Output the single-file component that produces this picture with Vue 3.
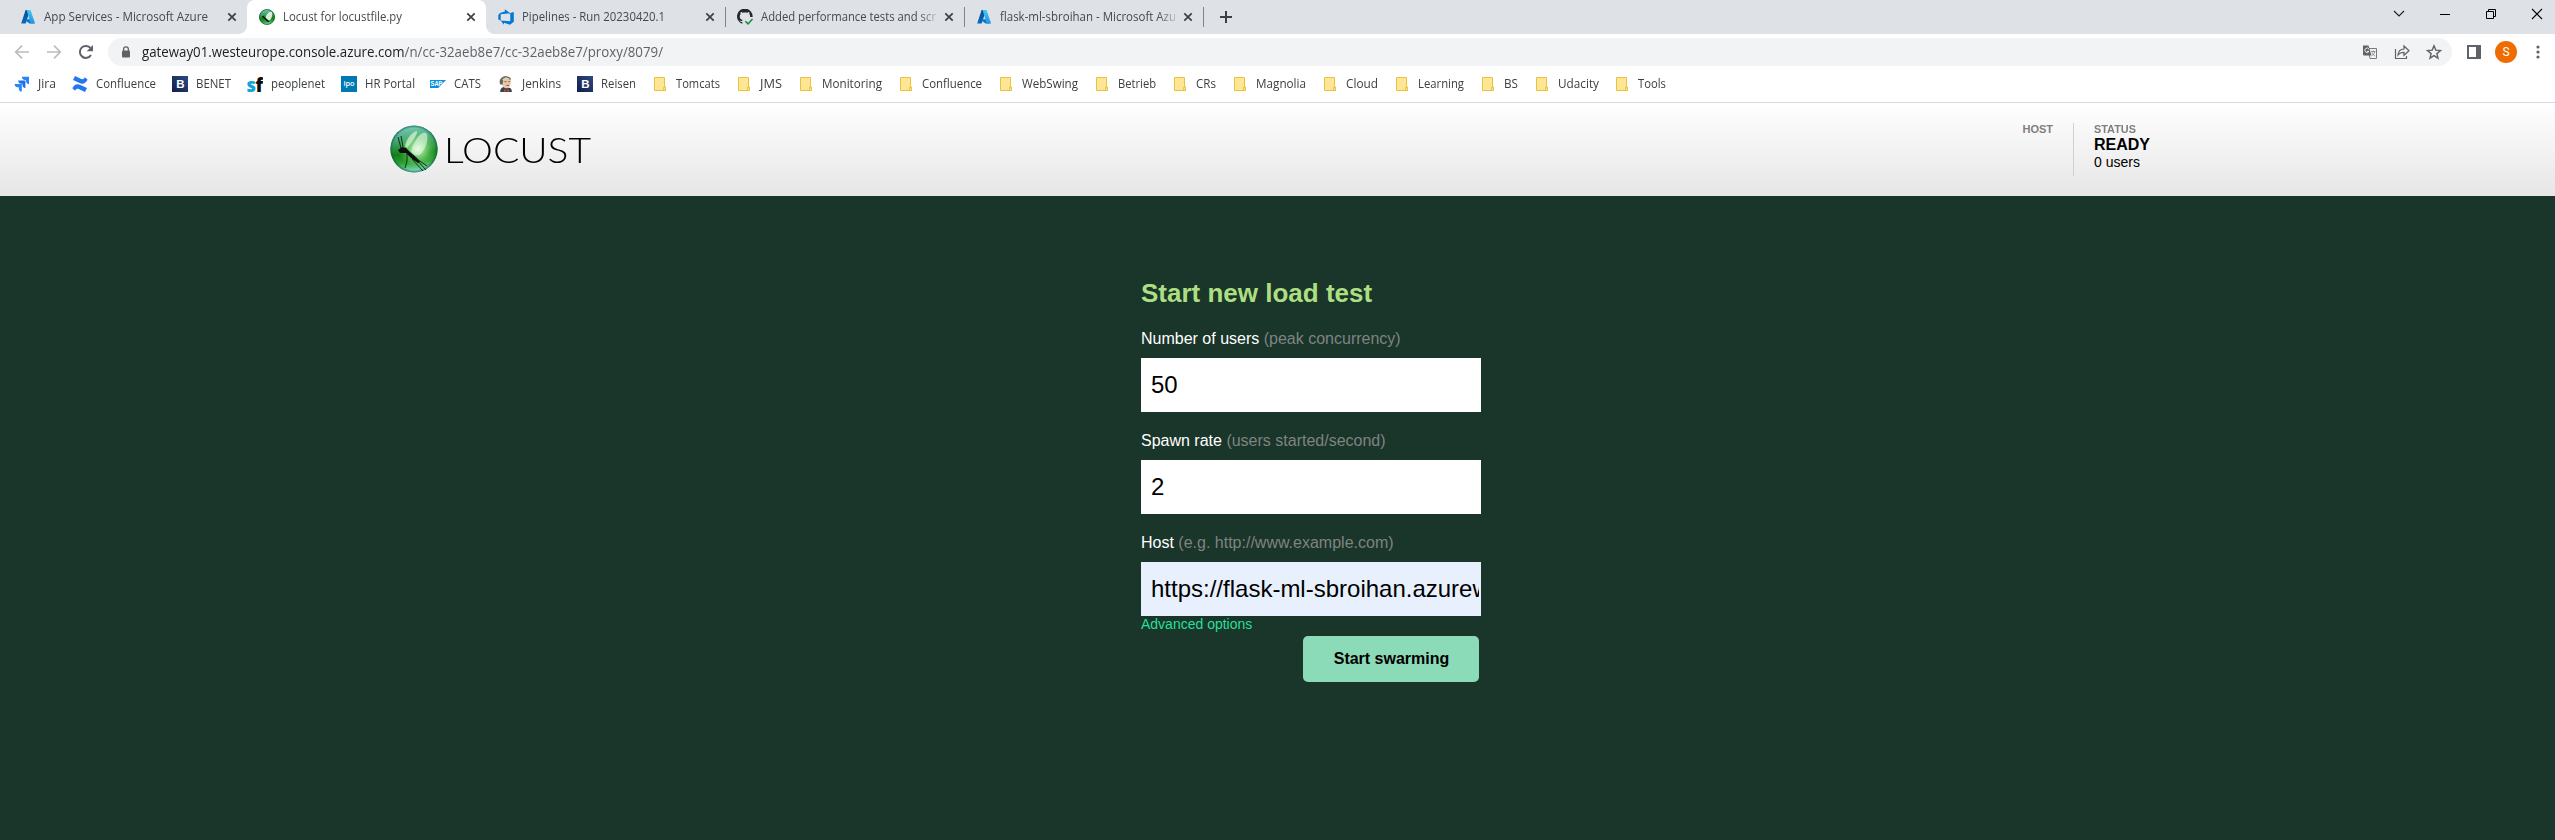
<script setup>
const tabs = [
  { icon: 'azure', title: 'App Services - Microsoft Azure', w: 164 },
  { icon: 'locust', title: 'Locust for locustfile.py', w: 119, active: true },
  { icon: 'devops', title: 'Pipelines - Run 20230420.1', w: 143 },
  { icon: 'github', title: 'Added performance tests and scr', w: 175, line: true, fade: true },
  { icon: 'azure', title: 'flask-ml-sbroihan - Microsoft Azu', w: 176, line: true, fade: true },
]

/* slot: distance to the next bookmark, w: label width */
const bookmarks = [
  { icon: 'jira', label: 'Jira', slot: 58, w: 18 },
  { icon: 'confluence', label: 'Confluence', slot: 100, w: 60 },
  { icon: 'benet', label: 'BENET', slot: 75, w: 35 },
  { icon: 'sf', label: 'peoplenet', slot: 94, w: 54 },
  { icon: 'ipo', label: 'HR Portal', slot: 89, w: 50 },
  { icon: 'sap', label: 'CATS', slot: 68, w: 27 },
  { icon: 'jenkins', label: 'Jenkins', slot: 79, w: 39 },
  { icon: 'benet', label: 'Reisen', slot: 75, w: 35 },
  { icon: 'folder', label: 'Tomcats', slot: 84, w: 44 },
  { icon: 'folder', label: 'JMS', slot: 62, w: 22 },
  { icon: 'folder', label: 'Monitoring', slot: 100, w: 60 },
  { icon: 'folder', label: 'Confluence', slot: 100, w: 60 },
  { icon: 'folder', label: 'WebSwing', slot: 96, w: 56 },
  { icon: 'folder', label: 'Betrieb', slot: 78, w: 38 },
  { icon: 'folder', label: 'CRs', slot: 60, w: 20 },
  { icon: 'folder', label: 'Magnolia', slot: 90, w: 50 },
  { icon: 'folder', label: 'Cloud', slot: 72, w: 32 },
  { icon: 'folder', label: 'Learning', slot: 86, w: 46 },
  { icon: 'folder', label: 'BS', slot: 54, w: 14 },
  { icon: 'folder', label: 'Udacity', slot: 80, w: 41 },
  { icon: 'folder', label: 'Tools', slot: 68, w: 28 },
]

const fields = [
  { label: 'Number of users', hint: '(peak concurrency)', value: '50' },
  { label: 'Spawn rate', hint: '(users started/second)', value: '2' },
  { label: 'Host', hint: '(e.g. http://www.example.com)', value: 'https://flask-ml-sbroihan.azurew', filled: true },
]

/* condenses a label horizontally to the given width */
const vFit = {
  mounted(el, { value }) {
    const natural = el.getBoundingClientRect().width
    el.style.transform = `scaleX(${value / natural})`
  },
}
</script>

<template>
  <div class="window">
    <svg class="defs" width="0" height="0">
      <defs>
        <linearGradient id="az1" x1="0" y1="0" x2="0" y2="1"><stop offset="0" stop-color="#114a8b" /><stop offset="1" stop-color="#0669bc" /></linearGradient>
        <linearGradient id="az2" x1="0" y1="0" x2="0" y2="1"><stop offset="0" stop-color="#3ccbf4" /><stop offset="1" stop-color="#2892df" /></linearGradient>
        <linearGradient id="navy" x1="0" y1="1" x2="1" y2="0"><stop offset="0" stop-color="#131c4c" /><stop offset="1" stop-color="#2b4b80" /></linearGradient>
        <linearGradient id="ball" x1="0.2" y1="0" x2="0.3" y2="1"><stop offset="0" stop-color="#7fd0c6" /><stop offset="0.3" stop-color="#4aa878" /><stop offset="0.62" stop-color="#128014" /><stop offset="0.8" stop-color="#2da132" /><stop offset="1" stop-color="#86dcc6" /></linearGradient>
        <radialGradient id="glow" cx="0.58" cy="0.5" r="0.42"><stop offset="0" stop-color="#e2fbdd" /><stop offset="0.4" stop-color="#8fdf88" stop-opacity="0.8" /><stop offset="1" stop-color="#4fc04e" stop-opacity="0" /></radialGradient>
        <radialGradient id="rim" cx="0.5" cy="0.5" r="0.5"><stop offset="0.88" stop-color="#0a5a4c" stop-opacity="0" /><stop offset="1" stop-color="#0a5a4c" stop-opacity="0.7" /></radialGradient>

        <symbol id="azure" viewBox="0 0 16 16">
          <path d="M5.6 1h4.5L5.7 14.6H1.2z" fill="url(#az1)" />
          <path d="M6.3 10.2h6l1.6 4.4H9.6L5 11.3z" fill="#0078d4" />
          <path d="M6.6 1h3.9l4.6 13.6h-4.5z" fill="url(#az2)" />
        </symbol>
        <symbol id="locust" viewBox="0 0 48 48">
          <circle cx="24" cy="24" r="23.6" fill="url(#ball)" />
          <circle cx="24" cy="24" r="23.6" fill="url(#glow)" />
          <path d="M15 21C17 13 22 7 27 6C28 9 22 17 17 23z" fill="#d8f4df" opacity="0.7" />
          <path d="M21 26C25 14 31 6 36 8C40 12 35 27 29 30C26 31 22 29 21 26z" fill="#e8fae8" opacity="0.6" />
          <circle cx="24" cy="24" r="23.6" fill="url(#rim)" />
          <path d="M8 25L12 22L16 23L20 27L27 33L30 37L28 38L21 33L16 28L10 28z" fill="#0b120e" />
          <path d="M11 23L8 12M13 22L11 11M17 28L17 36L15 43M25 33L36 45M27 34L37 41M22 34L33 46" stroke="#0d1f14" stroke-width="0.9" fill="none" />
        </symbol>
        <symbol id="favlocust" viewBox="0 0 48 48">
          <circle cx="24" cy="24" r="23.6" fill="url(#ball)" />
          <path d="M18 30C22 16 30 6 38 9C42 16 38 32 31 34C25 36 20 34 18 30z" fill="#e8fae8" opacity="0.9" />
          <path d="M8 23L13 20L31 37L27 40L16 29z" fill="#0b120e" />
          <circle cx="24" cy="24" r="22.4" fill="none" stroke="#17612c" stroke-width="2.4" />
        </symbol>
        <symbol id="devops" viewBox="0 0 16 16">
          <path d="M15.8 3v9.7L12 15.8l-6-2.1v2.1l-3.4-4.3 9.7.7V4.1zM12.3 4.2L6.8.3v2.3L2 4 .3 6v4.6l2.4 1V5.2z" fill="#0078d4" />
        </symbol>
        <symbol id="github" viewBox="0 0 16 16">
          <path d="M6.1 15C5.600 15.200 5.300 15 5.300 14.600V12.900C3.200 13.200 2.900 12 2.200 11.600C3.300 11.300 3.900 12.500 5.300 11.700L5.600 10.900C2.700 10.400 2 7 3.600 5C3.300 4 3.600 3.100 3.800 2.900C4.800 2.900 5.400 3.600 5.800 3.800C7.200 3.400 8.900 3.400 10.200 3.800C10.700 3.400 11.500 2.900 12.200 2.900C12.500 3.700 12.500 4.300 12.400 5C13 5.800 13.300 6.600 13 8L15.600 8A7.800 7.800 0 1 0 6.100 15z" fill="#24292f" />
          <path d="M8.300 12.200l2.800 2.700 4.400-5" fill="none" stroke="#1a8a34" stroke-width="1.500" />
        </symbol>
        <symbol id="jira" viewBox="0 0 16 16">
          <path d="M7.8.8H15v7.500A3.400 3.400 0 0 1 12 5.100V4H11A3.300 3.300 0 0 1 7.800.8z" fill="#2684ff" />
          <path d="M4.200 4.500h7.200V12a3.300 3.300 0 0 1-3-3.200V7.700H7.300a3.200 3.200 0 0 1-3.100-3.200z" fill="#1d72e8" />
          <path d="M.6 8.100h7.200v7.500a3.300 3.300 0 0 1-3-3.200v-1.100H3.700A3.200 3.200 0 0 1 .6 8.100z" fill="#2684ff" />
        </symbol>
        <symbol id="confluence" viewBox="0 0 16 16">
          <path d="M.3 12.200C3.300 7.400 5.800 7.800 9 9.300l6 2.700-2 4-5.800-2.700c-2-.9-2.800-.6-4.100 1.400z" fill="#2477f2" />
          <path d="M15.700 3.700C12.700 8.500 10.200 8.200 7 6.700L1 4 3 0l5.800 2.700c2 .9 2.800.6 4.100-1.400z" fill="#2477f2" />
        </symbol>
        <symbol id="benet" viewBox="0 0 16 16">
          <rect width="16" height="16" fill="url(#navy)" />
          <text x="8.300" y="12" text-anchor="middle" font-family="Liberation Sans, sans-serif" font-weight="700" font-size="11.500" fill="#fff">B</text>
        </symbol>
        <symbol id="sf" viewBox="0 0 16 16">
          <text x="-0.600" y="15.600" font-family="Open Sans, sans-serif" font-weight="800" font-size="19" textLength="9.500" lengthAdjust="spacingAndGlyphs" fill="#13a3dc">s</text>
          <text x="8.600" y="15.600" font-family="Open Sans, sans-serif" font-weight="800" font-size="19.500" textLength="7.600" lengthAdjust="spacingAndGlyphs" fill="#0b0b0b">f</text>
        </symbol>
        <symbol id="ipo" viewBox="0 0 16 16">
          <rect width="16" height="16" fill="#0078b4" />
          <text x="8" y="10.300" text-anchor="middle" font-family="Open Sans, sans-serif" font-weight="600" font-size="7.400" fill="#fff">ipo</text>
        </symbol>
        <symbol id="sap" viewBox="0 0 16 16">
          <path d="M0 4h16L8.200 12H0z" fill="#0a8fdc" />
          <text x="0.500" y="10.400" font-family="Liberation Sans, sans-serif" font-weight="700" font-size="6.600" textLength="12" lengthAdjust="spacingAndGlyphs" fill="#fff">SAP</text>
        </symbol>
        <symbol id="jenkins" viewBox="0 0 16 16">
          <path d="M2.200 16C2 12.800 4 11 6.200 11l6 1c1.400 1 1.600 2.500 1.600 4z" fill="#344552" />
          <path d="M3.400 5C3.200 1.700 5.300.3 8 .3c3.400 0 5 2.200 5 5 0 3.600-1.400 7-4.400 7S3.700 9.700 3.400 5z" fill="#e9c8a8" />
          <path d="M2 8.300C.5 3.500 3.800-.2 8.200.2c2.400.1 4.600 1.600 4.900 3.600L8.800 2.600 5.200 4.500 4.500 8.800z" fill="#6b665b" />
          <path d="M4.400 3L8 1.200l3.800 1.200L8.600 3.200 5.200 5z" fill="#d8d2c2" />
          <path d="M6.500 5.700h2M10.300 5.700h1.600M8.500 9.400h2.500" stroke="#53422e" stroke-width="0.8" />
          <path d="M6 13l2.600 1.200L11 13v3l-2.400-1.100L6 16z" fill="#d33833" />
        </symbol>
        <symbol id="folder" viewBox="0 0 16 16">
          <path d="M2.500 1.500h10V11h1v3.500h-11z" fill="#ffe694" stroke="#e8c342" />
          <path d="M11.500 14.400V11.200h1.900v3.200z" fill="#ffe694" stroke="#e8c342" stroke-width="0.9" />
        </symbol>
      </defs>
    </svg>

    <div class="tabstrip">
      <div v-for="(t, i) in tabs" :key="i" class="tab" :class="{ active: t.active, line: t.line }">
        <svg class="ico"><use :href="t.icon === 'locust' ? '#favlocust' : '#' + t.icon" /></svg>
        <div class="title" :class="{ fade: t.fade }"><span v-fit="t.w" class="fit">{{ t.title }}</span></div>
        <svg class="x" viewBox="0 0 10 10"><path d="M1.300 1.300l7.400 7.400M8.700 1.300L1.300 8.700" stroke="#3c4043" stroke-width="1.700" /></svg>
      </div>
      <div class="newtab"><svg width="12" height="12"><path d="M6 0v12M0 6h12" stroke="#3c4043" stroke-width="2" /></svg></div>
      <div class="controls">
        <svg viewBox="0 0 12 12"><path d="M1 3l5 5 5-5" fill="none" stroke="#222" stroke-width="1.200" /></svg>
        <svg viewBox="0 0 12 12"><path d="M1 6.500h10" stroke="#000" /></svg>
        <svg viewBox="0 0 12 12"><path d="M1.500 3.500h7v7h-7zM3.500 3V1.500h7v7H9" fill="none" stroke="#000" /></svg>
        <svg viewBox="0 0 12 12"><path d="M1 1l10 10M11 1L1 11" stroke="#000" stroke-width="1.100" /></svg>
      </div>
    </div>

    <div class="toolbar">
      <div class="nav">
        <svg viewBox="0 0 16 16"><path d="M15 8H2M8 1.700L1.700 8 8 14.300" fill="none" stroke="#babcbe" stroke-width="1.700" /></svg>
        <svg viewBox="0 0 16 16"><path d="M1 8h13M8 1.700L14.300 8 8 14.300" fill="none" stroke="#babcbe" stroke-width="1.700" /></svg>
        <svg viewBox="0 0 16 16"><path d="M13 11A6 6 0 1 1 12.600 4.200" fill="none" stroke="#5f6368" stroke-width="2" /><path d="M15 1v6.300H8.700z" fill="#5f6368" /></svg>
      </div>
      <div class="omnibox">
        <svg class="lock" viewBox="0 0 10 12"><path d="M2.600 5V3.200a2.400 2.400 0 0 1 4.800 0V5" fill="none" stroke="#5f6368" stroke-width="1.300" /><rect x="1" y="4.500" width="8" height="7" rx="1" fill="#5f6368" /></svg>
        <div class="url"><span v-fit="521" class="fit"><b>gateway01.westeurope.console.azure.com</b>/n/cc-32aeb8e7/cc-32aeb8e7/proxy/8079/</span></div>
        <div class="actions">
          <svg viewBox="0 0 16 16">
            <path d="M6 4.500h8.500v10H8z" fill="#f1f3f4" stroke="#777b80" />
            <path d="M1 1.500h5.500l3 10H2a1 1 0 0 1-1-1z" fill="#5f6368" />
            <path d="M7 5.200A2.200 2.200 0 1 0 7 7.400H5" fill="none" stroke="#f1f3f4" />
            <path d="M9 7.500h4.500M11.300 6.500v1M12.500 7.500c0 2-1.500 3.500-3 4.500M10 8.500c.5 1.500 2 3 3.300 3.500" fill="none" stroke="#777b80" stroke-width="0.8" />
          </svg>
          <svg viewBox="0 0 16 16">
            <path d="M1.500 5v9.500h11V12" fill="none" stroke="#5f6368" stroke-width="1.200" />
            <path d="M4 11c.3-3.800 2.200-5.800 6-6V2l5 4.700-5 4.600V8.300C7.500 8.300 5.500 9 4 11z" fill="none" stroke="#5f6368" stroke-width="1.200" />
          </svg>
          <svg viewBox="0 0 16 16"><path d="M8 1.800l1.800 4.300 4.700.4-3.600 3.100 1.100 4.600L8 11.700l-4 2.500 1.100-4.600L1.500 6.500l4.700-.4z" fill="none" stroke="#5f6368" stroke-width="1.400" /></svg>
        </div>
      </div>
      <svg class="panel" viewBox="0 0 14 14"><path d="M0 0h14v14H0zM2 2v10h7V2z" fill="#5f6368" fill-rule="evenodd" /></svg>
      <div class="avatar">S</div>
      <svg class="dots" viewBox="0 0 4 14"><g fill="#5f6368"><circle cx="2" cy="2" r="1.600" /><circle cx="2" cy="7" r="1.600" /><circle cx="2" cy="12" r="1.600" /></g></svg>
    </div>

    <div class="bookmarks">
      <div v-for="(b, i) in bookmarks" :key="i" class="bm" :style="{ width: b.slot + 'px' }">
        <svg class="ico"><use :href="'#' + b.icon" /></svg>
        <span v-fit="b.w" class="fit">{{ b.label }}</span>
      </div>
    </div>

    <header class="head">
      <svg class="logo"><use href="#locust" /></svg>
      <div class="brand"><span v-fit="147" class="fit">LOCUST</span></div>
      <div class="boxes">
        <div class="box host"><div class="cap">HOST</div></div>
        <div class="box status">
          <div class="cap"><span v-fit="42" class="fit">STATUS</span></div>
          <div class="ready">READY</div>
          <div class="users">0 users</div>
        </div>
      </div>
    </header>

    <main class="main">
      <div class="form">
        <h2>Start new load test</h2>
        <div v-for="f in fields" :key="f.label" class="field">
          <label>{{ f.label }} <span>{{ f.hint }}</span></label>
          <div class="input" :class="{ filled: f.filled }"><div class="value">{{ f.value }}</div></div>
        </div>
        <a class="adv">Advanced options</a>
        <button class="go">Start swarming</button>
      </div>
    </main>
  </div>
</template>

<style>
body { margin: 0; background: #1a352a; }
</style>

<style scoped>
.window { width: 2555px; height: 840px; overflow: hidden; display: flex; flex-direction: column; background: #fff; font-family: "Liberation Sans", Arial, sans-serif; }
.defs { position: absolute; }
svg { flex: none; display: block; }
.ico { width: 16px; height: 16px; }
.fit { display: inline-block; transform-origin: 0 50%; white-space: nowrap; }

.tabstrip { height: 34px; flex: none; display: flex; background: #dee1e6; padding-left: 8px; font: 12px/34px "Open Sans", "Noto Sans", sans-serif; color: #45494d; }
.tab { position: relative; box-sizing: border-box; width: 239px; height: 34px; display: flex; align-items: center; padding-left: 12px; }
.title { width: 176px; height: 34px; margin-left: 8px; white-space: nowrap; }
.fade { width: 182px; -webkit-mask-image: linear-gradient(90deg, #000 158px, transparent 180px); mask-image: linear-gradient(90deg, #000 158px, transparent 180px); }
.x { width: 10px; height: 10px; position: absolute; left: 219px; top: 12px; }
.active { background: #fff; border-radius: 8px 8px 0 0; }
.active::before, .active::after { content: ""; position: absolute; bottom: 0; width: 8px; height: 8px; }
.active::before { left: -8px; background: radial-gradient(circle at 0 0, transparent 7.5px, #fff 8px); }
.active::after { right: -8px; background: radial-gradient(circle at 100% 0, transparent 7.5px, #fff 8px); }
.line::before { content: ""; position: absolute; left: 0; top: 7px; width: 1px; height: 20px; background: #808489; }
.newtab { position: relative; width: 60px; display: flex; align-items: center; padding-left: 17px; }
.newtab::before { content: ""; position: absolute; left: 0; top: 7px; width: 1px; height: 20px; background: #808489; }
.controls { margin-left: auto; padding-right: 12px; display: flex; gap: 34px; padding-top: 8px; }
.controls svg { width: 12px; height: 12px; }

.toolbar { height: 36px; flex: none; display: flex; align-items: center; box-sizing: border-box; }
.nav { display: flex; gap: 16px; padding-left: 14px; width: 94px; }
.nav svg { width: 16px; height: 16px; }
.omnibox { width: 2344px; height: 28px; border-radius: 14px; background: #f1f3f4; display: flex; align-items: center; }
.lock { width: 10px; height: 12px; margin-left: 13px; }
.url { margin-left: 11px; font: 14px/28px "Open Sans", "Noto Sans", sans-serif; color: #5f6368; width: 520px; height: 28px; white-space: nowrap; }
.url b { font-weight: 400; color: #202124; }
.actions { margin-left: auto; margin-right: 10px; display: flex; gap: 16px; }
.actions svg { width: 16px; height: 16px; }
.panel { width: 14px; height: 14px; margin-left: 15px; }
.avatar { width: 22px; height: 22px; margin-left: 14px; border-radius: 50%; background: #ef6c00; color: #fff; font: 12px/22px Roboto, sans-serif; text-align: center; }
.dots { width: 4px; height: 14px; margin-left: 19px; }

.bookmarks { height: 33px; box-sizing: border-box; flex: none; display: flex; padding-left: 14px; border-bottom: 1px solid #d9dadc; font: 12px/28px "Open Sans", "Noto Sans", sans-serif; color: #3c4043; }
.bm { height: 28px; flex: none; display: flex; align-items: center; gap: 8px; }

.head { height: 93px; flex: none; display: flex; background: linear-gradient(#fff, #e6e6e6); }
.logo { width: 48px; height: 48px; margin: 22px 0 0 390px; }
.brand { width: 160px; margin: 20px 0 0 6px; height: 52px; font: 300 36px/52px Lato, sans-serif; color: #000; }
.boxes { margin-left: auto; display: flex; padding: 20px 385px 0 0; }
.box { height: 53px; box-sizing: border-box; }
.host { padding-right: 20px; border-right: 1px solid #d0d0d0; }
.status { width: 96px; padding-left: 20px; }
.cap { font-size: 11px; line-height: 13px; font-weight: 700; color: #7f7f7f; }
.ready { font-size: 16px; line-height: 18px; font-weight: 700; color: #000; }
.users { font-size: 14px; line-height: 16px; color: #000; }

.main { flex: 1; background: #1a352a; display: flex; justify-content: flex-start; }
.form { width: 340px; margin-left: 1141px; padding-top: 82px; display: flex; flex-direction: column; }
h2 { margin: 0; font-size: 26px; line-height: 30px; color: #addf82; }
.field { height: 102px; display: flex; flex-direction: column; }
h2 + .field { margin-top: 2px; }
label { height: 48px; box-sizing: border-box; padding-top: 20px; font-size: 16px; line-height: 18px; color: #fff; }
label span { color: #7f8482; }
.input { height: 54px; background: #fff; padding: 0 2px 0 10px; box-sizing: border-box; }
.filled { background: #e8f0fe; }
.value { overflow: hidden; white-space: nowrap; font-size: 24px; line-height: 54px; height: 54px; color: #000; }
.adv { font-size: 14px; line-height: 16px; color: #28df99; }
.go { align-self: flex-end; margin: 4px 2px 0 0; width: 176px; height: 46px; border: 0; padding: 0 0 0 1px; border-radius: 5px; background: #8bdab8; font: 700 16px/46px "Liberation Sans", Arial, sans-serif; color: #000; }
</style>
